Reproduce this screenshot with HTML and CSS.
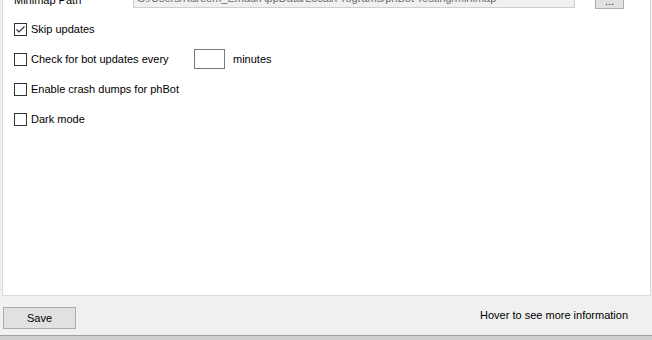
FILE: index.html
```html
<!DOCTYPE html>
<html>
    <head>
        <meta http-equiv="Content-type" content="text/html; charset=utf-8" />
        <link rel="stylesheet" href="styles.css">
        <title>phBot Settings</title>
    </head>
    <body>
        <div class="panel">
            <div class="pathRow">
                <span class="pathLabel">Minimap Path</span>
                <div class="pathField">C:/Users/Kareem_Emad/AppData/Local/Programs/phBot Testing/minimap</div>
                <div class="browse">...</div>
            </div>
            <div class="row">
                <span class="box">
                    <svg width="11" height="11" viewBox="0 0 11 11"><path d="M1.5 5.5 L4 8 L9.5 2.5" fill="none" stroke="#333" stroke-width="1.2"/></svg>
                </span>
                <span class="text">Skip updates</span>
            </div>
            <div class="row">
                <span class="box"></span>
                <span class="text wide">Check for bot updates every</span>
                <span class="minutesBox"></span>
                <span class="text">minutes</span>
            </div>
            <div class="row">
                <span class="box"></span>
                <span class="text">Enable crash dumps for phBot</span>
            </div>
            <div class="row">
                <span class="box"></span>
                <span class="text">Dark mode</span>
            </div>
        </div>
        <div class="footer">
            <div class="saveButton">Save</div>
            <div class="hint">Hover to see more information</div>
        </div>
        <div class="shadow"></div>
    </body>
</html>
```
FILE: styles.css
```css
body, html {
    background-color: #f0f0f0;
    font-family: "Liberation Sans", Arial, sans-serif;
    font-size: 11px;
    color: #000;
    margin: 0px;
    padding: 0px;
    overflow: hidden;
}
.panel {
    box-sizing: border-box;
    display: flex;
    flex-direction: column;
    height: 296px;
    margin-left: 2px;
    margin-right: 1px;
    background-color: white;
    border-left: 1px solid #dadada;
    border-right: 1px solid #dadada;
    border-bottom: 1px solid #dadada;
    padding-left: 11px;
}
.pathRow {
    display: flex;
    align-items: flex-start;
    height: 23px;
    margin-top: -15px;
    margin-bottom: 6px;
}
.pathLabel {
    width: 119px;
    line-height: 23px;
    padding-top: 4px;
}
.pathField {
    box-sizing: border-box;
    width: 442px;
    height: 23px;
    padding-left: 3px;
    padding-top: 4px;
    line-height: 17px;
    background-color: #f0f0f0;
    border: 1px solid #cfcfcf;
    color: #6d6d6d;
    white-space: nowrap;
    overflow: hidden;
}
.browse {
    box-sizing: border-box;
    width: 29px;
    height: 24px;
    margin-left: 20px;
    background-color: #e1e1e1;
    border: 1px solid #adadad;
    text-align: center;
    line-height: 30px;
    color: #1a1a80;
}
.row {
    display: flex;
    align-items: center;
    height: 30px;
}
.box {
    box-sizing: border-box;
    width: 13px;
    height: 13px;
    border: 1px solid #333;
    background-color: white;
    display: flex;
    align-items: center;
    justify-content: center;
    margin-right: 4px;
}
.box svg {
    display: block;
}
.text {
    white-space: nowrap;
}
.wide {
    width: 163px;
}
.minutesBox {
    box-sizing: border-box;
    width: 31px;
    height: 20px;
    border: 1px solid #7a7a7a;
    margin-right: 8px;
}
.footer {
    box-sizing: border-box;
    height: 39px;
    display: flex;
    align-items: flex-start;
    justify-content: space-between;
    padding-top: 11px;
    padding-left: 3px;
    padding-right: 24px;
}
.saveButton {
    box-sizing: border-box;
    width: 73px;
    height: 22px;
    background-color: #e1e1e1;
    border: 1px solid #adadad;
    text-align: center;
    line-height: 21px;
}
.hint {
    line-height: 17px;
}
.shadow {
    height: 5px;
    border-top: 1px solid #a0a0a0;
    background-color: #cfcfcf;
}
```
